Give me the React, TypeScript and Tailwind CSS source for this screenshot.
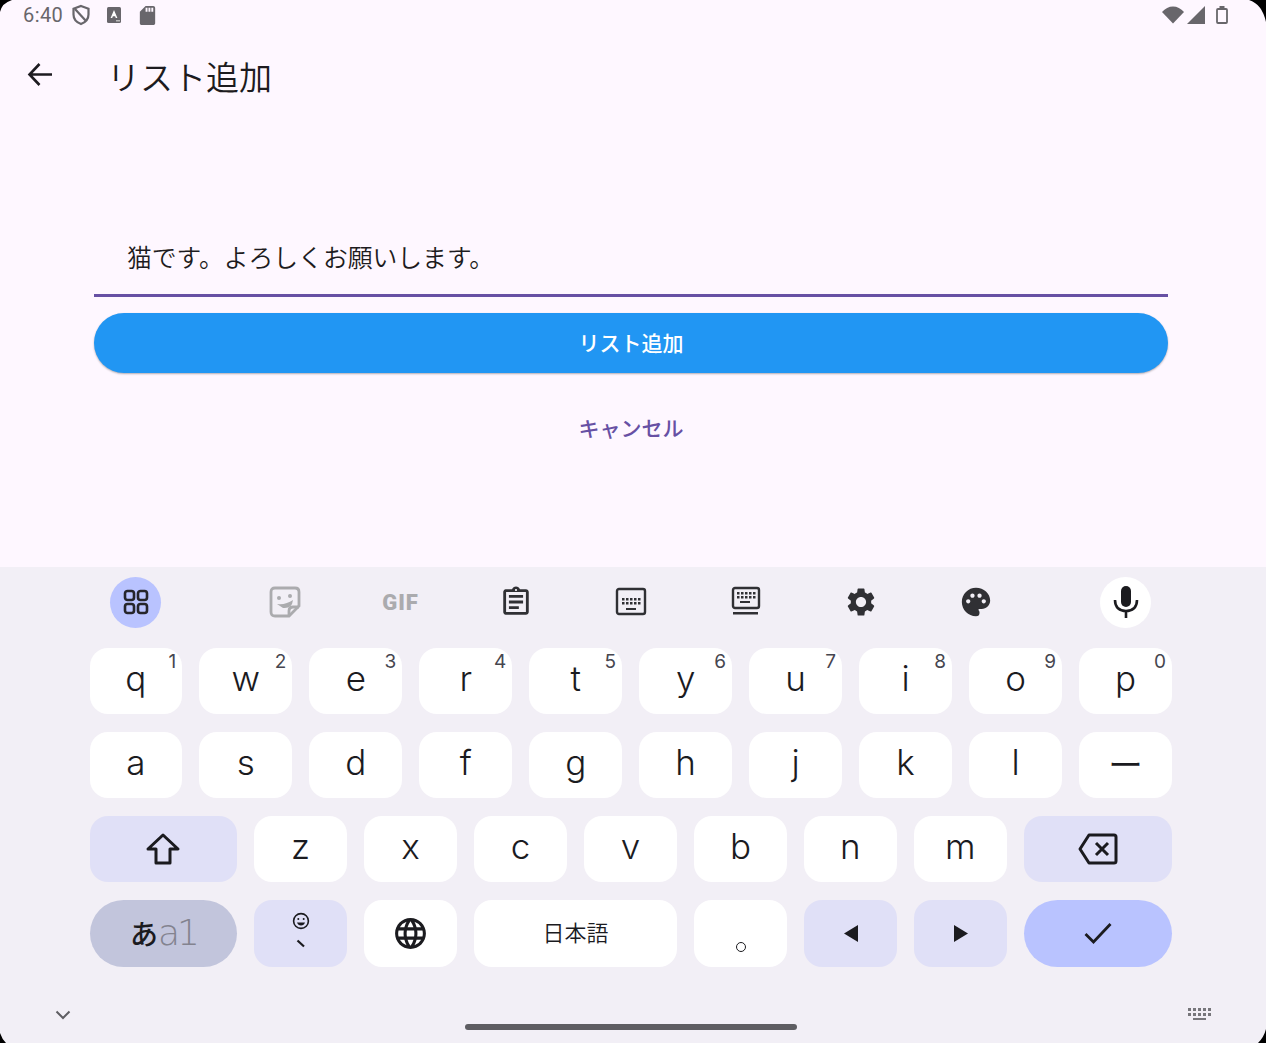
import type { ReactNode } from "react";
import { MdSettings, MdPalette, MdLanguage, MdOutlineAssignment, MdSdCard } from "react-icons/md";

const LATIN = "font-['Inter','Noto_Sans_CJK_JP',sans-serif]";

function Key({ label, hint }: { label: string; hint?: string }) {
  return (
    <div className={`relative h-[66.5px] w-[92.8px] shrink-0 rounded-[18px] bg-white flex items-center justify-center text-[35px] font-[350] text-[#1b1b1f] ${label === "ー" ? "pb-0" : "pb-[6px]"} ${LATIN}`}>
      {label}
      {hint && <span className="absolute right-[6px] top-[1px] text-[19px] leading-[26px] font-normal text-[#46464f]">{hint}</span>}
    </div>
  );
}

function KeyboardGlyph({ underline }: { underline?: boolean }) {
  return (
    <svg width="32" height="32" viewBox="0 0 32 32" fill="none" className="text-[#303034]">
      <rect x="2" y={underline ? 2 : 3} width={underline ? 26 : 28} height={underline ? 20 : 25} rx="2" stroke="currentColor" strokeWidth="2.4" transform={underline ? "translate(1 0)" : undefined} />
      <g fill="currentColor">
        {[7, 11, 15, 19, 23].map((x) => (
          <rect key={x} x={x} y={underline ? 6 : 12} width="2.5" height="2.5" />
        ))}
        {[7, 11, 15, 19, 23].map((x) => (
          <rect key={x} x={x} y={underline ? 10 : 16} width="2.5" height="2.5" />
        ))}
        <rect x={underline ? 10 : 11} y={underline ? 15 : 22} width="10" height="2" />
        {underline && <rect x="3" y="26" width="25" height="2.5" />}
      </g>
    </svg>
  );
}

function ToolSlot({ children }: { children: ReactNode }) {
  return <div className="w-[115px] flex items-center justify-center">{children}</div>;
}

export default function App() {
  const row1 = [
    ["q", "1"], ["w", "2"], ["e", "3"], ["r", "4"], ["t", "5"],
    ["y", "6"], ["u", "7"], ["i", "8"], ["o", "9"], ["p", "0"],
  ];
  const row2 = ["a", "s", "d", "f", "g", "h", "j", "k", "l", "ー"];
  const row3 = ["z", "x", "c", "v", "b", "n", "m"];

  return (
    <div className="relative h-[1043px] w-[1266px] overflow-hidden bg-[#fef7ff] flex flex-col font-['Noto_Sans_CJK_JP',sans-serif]">
      {/* status bar */}
      <div className="h-[30px] flex items-center justify-between pl-[23px] pr-[38px] text-[#68666b]">
        <div className="flex items-center">
          <span className="text-[20px] tracking-[0.4px] font-['Roboto',sans-serif]">6:40</span>
          <svg width="20" height="22" viewBox="0 0 20 22" fill="none" className="ml-[8px]">
            <path d="M10 2 L17.5 4.8 V10.5 C17.5 15 14.5 18.3 10 20 C5.5 18.3 2.5 15 2.5 10.5 V4.8 Z" stroke="currentColor" strokeWidth="2.2" />
            <path d="M4 5 L15 17" stroke="currentColor" strokeWidth="2.2" />
          </svg>
          <svg width="14" height="16" viewBox="0 0 14 16" className="ml-[16px]">
            <rect width="14" height="16" rx="1.5" fill="currentColor" />
            <path d="M7 3 L10.4 11 H8.8 L8.1 9.3 H5.9 L5.2 11 H3.6 Z" fill="#fff" />
            <rect x="9" y="13" width="4" height="1.5" fill="#bbb" />
          </svg>
          <MdSdCard className="ml-[15px]" size={23} />
        </div>
        <div className="flex items-center">
          <svg width="22" height="18" viewBox="0 0 22 18" fill="currentColor">
            <path d="M11 17.5 L0 6 C3 2.5 7 0.5 11 0.5 C15 0.5 19 2.5 22 6 Z" />
          </svg>
          <svg width="18" height="18" viewBox="0 0 18 18" fill="currentColor" className="ml-[3px]">
            <path d="M18 0 V18 H0 Z" />
          </svg>
          <svg width="12" height="18" viewBox="0 0 12 18" fill="none" className="ml-[11px]">
            <rect x="1" y="3" width="10" height="14" rx="1" stroke="currentColor" strokeWidth="1.8" />
            <rect x="3.5" y="0" width="5" height="2.5" fill="currentColor" />
          </svg>
        </div>
      </div>

      {/* app bar */}
      <div className="h-[96px] flex items-center pb-[2px] pl-[27px] text-[#1d1b20]">
        <svg width="25" height="25" viewBox="0 0 25 25" fill="none" stroke="currentColor" strokeWidth="2.6" className="mb-[6px]">
          <path d="M25 12.5 H3 M12.5 2 L2.5 12.5 L12.5 23" />
        </svg>
        <h1 className="ml-[55px] mb-[1px] text-[33px] leading-none font-[350]">リスト追加</h1>
      </div>

      {/* form */}
      <div className="flex-1 pl-[94px] pr-[98px] flex flex-col">
        <div className="mt-[105px] h-[66px] border-b-[3px] border-[#6750a4] px-[33px] pt-[5px] text-[24.8px] leading-[40px] text-[#1d1b20] font-[350]">
          猫です。よろしくお願いします。
        </div>
        <button className="mt-[16px] h-[60px] rounded-full bg-[#2196f3] text-white text-[21px] font-medium shadow-[0_1px_2px_rgba(0,0,0,0.3)]">
          リスト追加
        </button>
        <div className="mt-[31px] text-center text-[21px] leading-[46px] font-medium text-[#6750a4]">キャンセル</div>
      </div>

      {/* keyboard */}
      <div className="relative h-[476px] bg-[#f2eff6] flex flex-col pl-[90px] pr-[94px]">
        <div className="h-[70px] mb-[10.5px] flex items-center text-[#303034]">
          <div className="ml-[20px] h-[51px] w-[51px] rounded-full bg-[#b9c3ff] flex items-center justify-center">
            <svg width="26" height="26" viewBox="0 0 26 26" fill="none" stroke="#25252b" strokeWidth="2.6">
              <rect x="2" y="2" width="9" height="9" rx="2.5" />
              <rect x="15" y="2" width="9" height="9" rx="2.5" />
              <rect x="2" y="15" width="9" height="9" rx="2.5" />
              <rect x="15" y="15" width="9" height="9" rx="2.5" />
            </svg>
          </div>
          <div className="ml-[67px] flex items-center">
            <ToolSlot>
              <svg width="32" height="32" viewBox="0 0 32 32" fill="none" className="mr-[2px] text-[#ababae]">
                <path d="M6 2 H26 Q30 2 30 6 V20 L20 30 H6 Q2 30 2 26 V6 Q2 2 6 2 Z" stroke="currentColor" strokeWidth="2.8" />
                <path d="M20 30 V25 Q20 21 24 21 H30" stroke="currentColor" strokeWidth="2.8" />
                <circle cx="10" cy="12" r="2" fill="currentColor" />
                <circle cx="21" cy="10" r="2" fill="currentColor" />
                <path d="M8 18 Q17 19 24 14 Q23 23 14 22 Z" fill="currentColor" />
              </svg>
            </ToolSlot>
            <ToolSlot>
              <span className="mt-[2px] text-[22px] leading-none font-black tracking-[1px] text-[#ababae] font-['Roboto',sans-serif]">GIF</span>
            </ToolSlot>
            <ToolSlot><MdOutlineAssignment className="text-[#303034]" size={34} /></ToolSlot>
            <ToolSlot><KeyboardGlyph /></ToolSlot>
            <ToolSlot><KeyboardGlyph underline /></ToolSlot>
            <ToolSlot><MdSettings size={34} /></ToolSlot>
            <ToolSlot><MdPalette size={34} /></ToolSlot>
          </div>
          <div className="ml-[67px] h-[51px] w-[51px] rounded-full bg-white flex items-center justify-center">
            <svg width="28" height="34" viewBox="0 0 28 34" fill="none">
              <rect x="9" y="1" width="10" height="21" rx="5" fill="#1b1b1f" />
              <path d="M3 15 C3 23 8 26 14 26 C20 26 25 23 25 15 M14 26 V33" stroke="#1b1b1f" strokeWidth="2.6" />
            </svg>
          </div>
        </div>

        <div className="flex flex-col gap-[17.5px]">
          <div className="flex justify-between -ml-[0.5px]">
            {row1.map(([k, h]) => <Key key={k} label={k} hint={h} />)}
          </div>
          <div className="flex justify-between -ml-[0.5px]">
            {row2.map((k) => <Key key={k} label={k} />)}
          </div>
          <div className="flex justify-between">
            <div className="h-[66.5px] w-[147px] rounded-[18px] bg-[#e0e0f7] flex items-center justify-center pr-[2px]">
              <svg width="36" height="34" viewBox="0 0 36 34" fill="none" stroke="#1b1b1f" strokeWidth="3" strokeLinejoin="round">
                <path d="M18 3 L33 17 H25 V31 H11 V17 H3 Z" />
              </svg>
            </div>
            {row3.map((k) => <Key key={k} label={k} />)}
            <div className="h-[66.5px] w-[148px] rounded-[18px] bg-[#e0e0f7] flex items-center justify-center">
              <svg width="40" height="32" viewBox="0 0 40 32" fill="none" stroke="#1b1b1f" strokeWidth="3" strokeLinejoin="round">
                <path d="M11 2 H36 Q38 2 38 4 V28 Q38 30 36 30 H11 L2 16 Z" />
                <path d="M18 10 L30 22 M30 10 L18 22" />
              </svg>
            </div>
          </div>
          <div className="flex justify-between">
            <div className="h-[67px] w-[147px] rounded-full bg-[#c2c5dc] flex items-center justify-center text-[#1b1b1f]">
              <span className="text-[28px] font-medium leading-none">あ</span>
              <span className="text-[36px] leading-none font-extralight text-[#83838f] tracking-[-3px] font-['DejaVu_Sans',sans-serif]">a1</span>
            </div>
            <div className="h-[67px] w-[93px] rounded-[18px] bg-[#e0e0f7] flex flex-col items-center justify-center pb-[6px]">
              <svg width="18" height="18" viewBox="0 0 18 18" fill="none" stroke="#1b1b1f" strokeWidth="1.6">
                <circle cx="9" cy="9" r="7.4" />
                <circle cx="6.3" cy="7" r="1" fill="#1b1b1f" stroke="none" />
                <circle cx="11.7" cy="7" r="1" fill="#1b1b1f" stroke="none" />
                <path d="M5 10.5 H13 Q12 13.5 9 13.5 Q6 13.5 5 10.5 Z" fill="#1b1b1f" stroke="none" />
              </svg>
              <svg width="10" height="10" viewBox="0 0 10 10" fill="none" className="mt-[9px]">
                <path d="M1.5 1.5 L8 7.5" stroke="#1b1b1f" strokeWidth="2.2" />
              </svg>
            </div>
            <div className="h-[67px] w-[93px] rounded-[18px] bg-white flex items-center justify-center">
              <MdLanguage className="text-[#1b1b1f]" size={37} />
            </div>
            <div className="h-[67px] w-[203px] rounded-[18px] bg-white flex items-center justify-center pb-[4px] text-[22px] font-[350] text-[#1b1b1f]">
              日本語
            </div>
            <div className="h-[67px] w-[93px] rounded-[18px] bg-white flex items-end justify-center pb-[15px]">
              <span className="h-[10px] w-[10px] rounded-full border-[1.5px] border-[#1b1b1f]" />
            </div>
            <div className="h-[67px] w-[93px] rounded-[18px] bg-[#e0e0f7] flex items-center justify-center">
              <svg width="14" height="17" viewBox="0 0 14 17" fill="#1b1b1f"><path d="M14 0 V17 L0 8.5 Z" /></svg>
            </div>
            <div className="h-[67px] w-[93px] rounded-[18px] bg-[#e0e0f7] flex items-center justify-center">
              <svg width="14" height="17" viewBox="0 0 14 17" fill="#1b1b1f"><path d="M0 0 V17 L14 8.5 Z" /></svg>
            </div>
            <div className="h-[67px] w-[148px] rounded-full bg-[#b9c3ff] flex items-center justify-center">
              <svg width="28" height="22" viewBox="0 0 28 22" fill="none" stroke="#1b1b1f" strokeWidth="2.8">
                <path d="M1.5 12 L9.5 20 L26.5 2" />
              </svg>
            </div>
          </div>
        </div>

        {/* bottom nav */}
        <div className="absolute bottom-0 left-0 right-0 h-[58px]">
          <svg width="16" height="10" viewBox="0 0 16 10" fill="none" stroke="#5f5e63" strokeWidth="2" className="absolute left-[55px] top-[25px]">
            <path d="M1.5 1.5 L8 8 L14.5 1.5" />
          </svg>
          <div className="absolute left-[465px] top-[39px] h-[6px] w-[332px] rounded-full bg-[#5e5d62]" />
          <svg width="26" height="14" viewBox="0 0 26 14" fill="#77767b" className="absolute left-[1187px] top-[23px]">
            {[1, 6, 11, 16, 21].map((x) => <rect key={x} x={x} y="0" width="3" height="3" />)}
            {[1, 6, 11, 16, 21].map((x) => <rect key={x} x={x} y="5" width="3" height="3" />)}
            <rect x="6" y="10" width="13" height="2" />
          </svg>
        </div>
      </div>

      {/* device corners */}
      <svg width="14" height="14" viewBox="0 0 14 14" className="absolute left-0 top-0"><path d="M0 0 H12 Q2 3 0 12 Z" fill="#000" /></svg>
      <svg width="17" height="22" viewBox="0 0 17 22" className="absolute right-0 top-0"><path d="M17 22 V0 H0 Q13 4 17 22 Z" fill="#000" /></svg>
      <svg width="8" height="14" viewBox="0 0 8 14" className="absolute bottom-0 right-0"><path d="M8 0 V14 H0 Q6 8 8 0 Z" fill="#000" /></svg>
      <svg width="6" height="10" viewBox="0 0 6 10" className="absolute bottom-0 left-0"><path d="M0 0 V10 H6 Q2 6 0 0 Z" fill="#000" /></svg>
    </div>
  );
}
